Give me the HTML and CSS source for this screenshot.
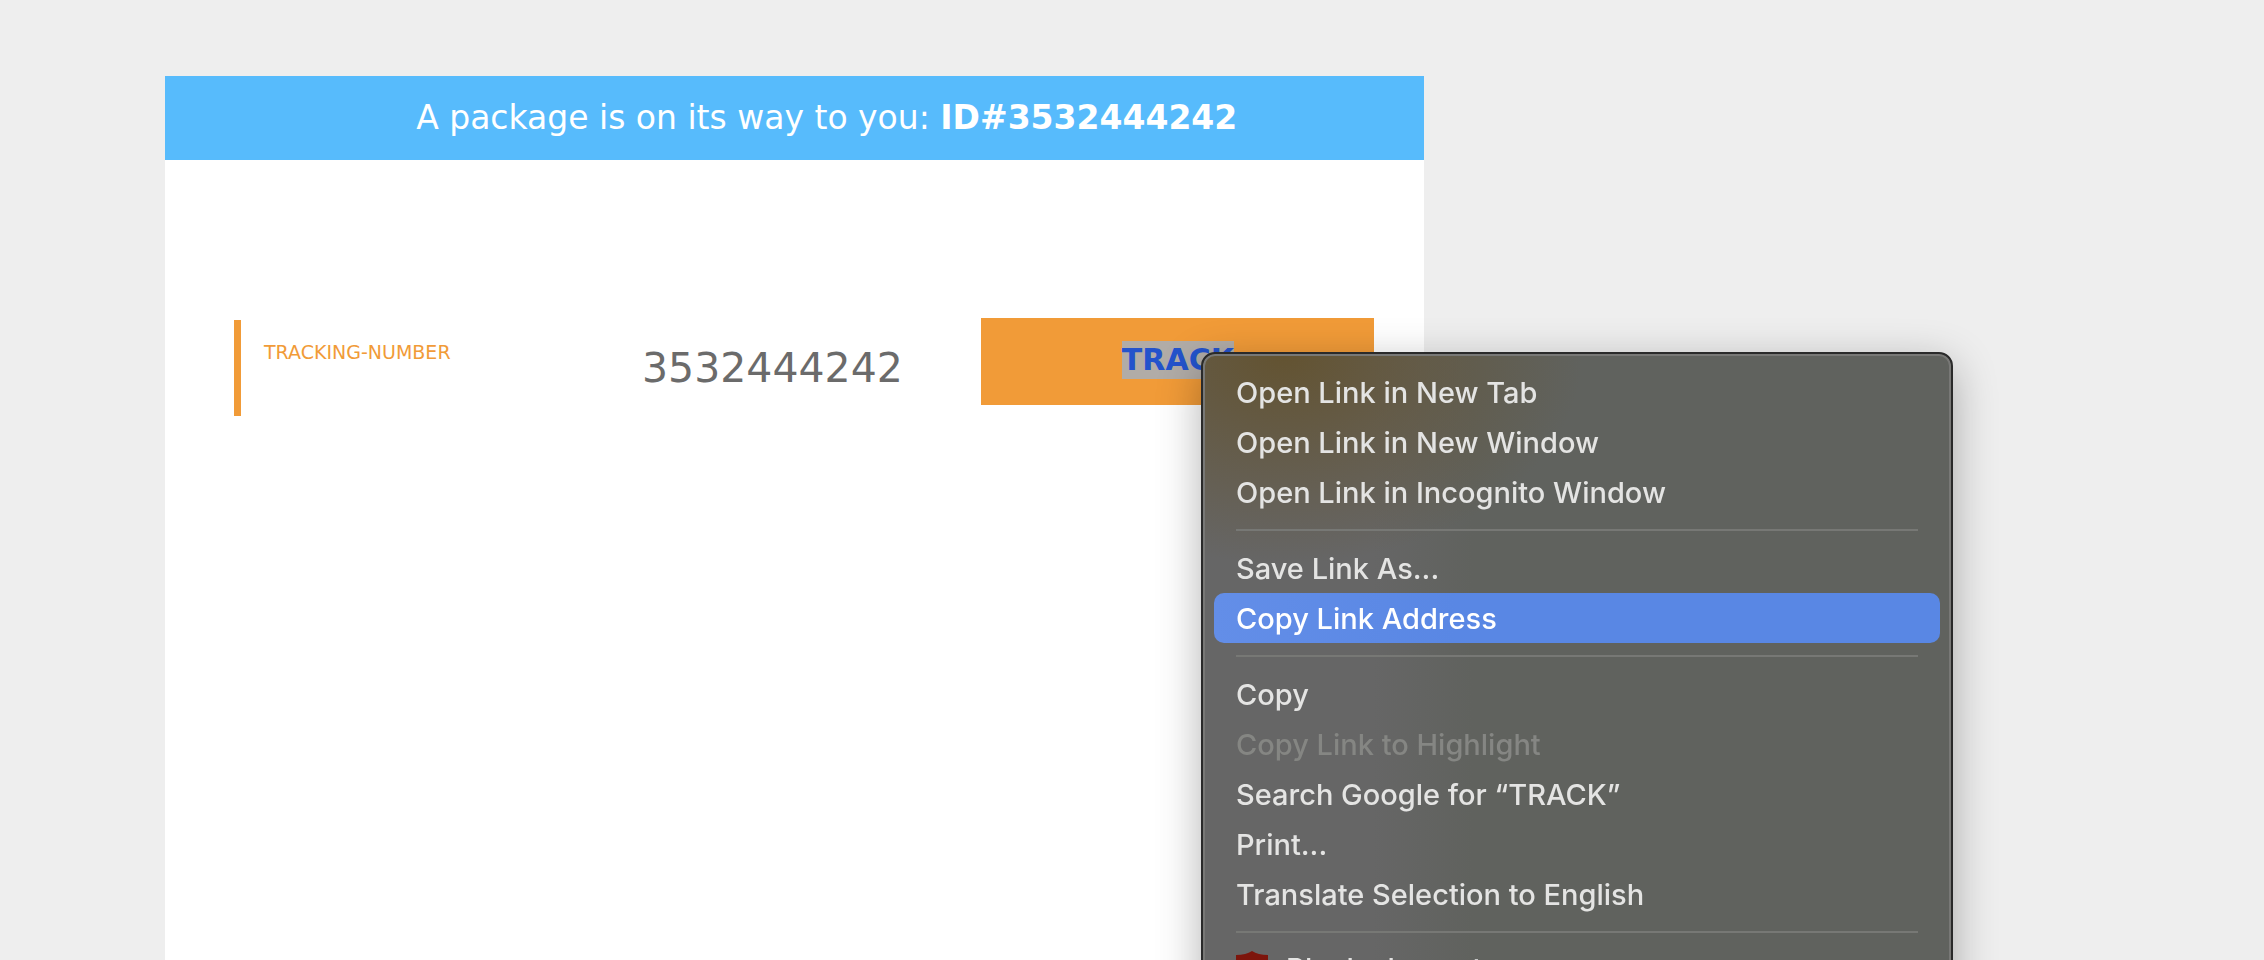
FILE: index.html
```html
<!DOCTYPE html>
<html lang="en">
<head>
<meta charset="utf-8">
<title>Package tracking</title>
<link rel="stylesheet" href="styles.css">
</head>
<body>
<main class="mail">
  <h1 class="mail-header">A package is on its way to you: <strong>ID#3532444242</strong></h1>
  <section class="tracking">
    <div class="tracking-label">TRACKING-NUMBER</div>
    <div class="tracking-number">3532444242</div>
    <a class="track-button" href="#track"><span class="selected">TRACK</span></a>
  </section>
</main>
<div class="menu" role="menu">
  <button class="item" role="menuitem">Open Link in New Tab</button>
  <button class="item" role="menuitem">Open Link in New Window</button>
  <button class="item" role="menuitem">Open Link in Incognito Window</button>
  <hr class="separator">
  <button class="item" role="menuitem">Save Link As...</button>
  <button class="item active" role="menuitem">Copy Link Address</button>
  <hr class="separator">
  <button class="item" role="menuitem">Copy</button>
  <button class="item" role="menuitem" disabled>Copy Link to Highlight</button>
  <button class="item" role="menuitem">Search Google for “TRACK”</button>
  <button class="item" role="menuitem">Print...</button>
  <button class="item" role="menuitem">Translate Selection to English</button>
  <hr class="separator">
  <button class="item with-icon" role="menuitem">
    <svg class="shield" viewBox="0 0 32 34" aria-hidden="true"><path d="M16 0 Q22 4 32 4 V16 Q32 28 16 34 Q0 28 0 16 V4 Q10 4 16 0Z" fill="#7d150c"/></svg>
    Block element...
  </button>
</div>
</body>
</html>
```
FILE: styles.css
```css
* {
  box-sizing: border-box;
}

html,
body {
  height: 100%;
  margin: 0;
  overflow: hidden;
}

body {
  display: flex;
  padding: 76px 0 0 165px;
  background: #eeeeee;
  font-family: "DejaVu Sans", Verdana, sans-serif;
}

.mail {
  width: 60%;
  background: #ffffff;
}

.mail-header {
  margin: 0;
  padding: 20px 0 21px 64px;
  background: #57bbfc;
  color: #ffffff;
  font-size: 33px;
  font-weight: 400;
  line-height: 43px;
  text-align: center;
}

.tracking {
  display: grid;
  grid-template-columns: 354px 1fr 393px;
  align-items: start;
  padding: 158px 50px 0 69px;
}

.tracking-label {
  margin-top: 2px;
  padding: 20px 0 0 23px;
  min-height: 96px;
  border-left: 7px solid #f19b38;
  color: #f19b38;
  font-size: 19px;
  line-height: 24px;
}

.tracking-number {
  padding: 26px 0 0 54px;
  color: #6b6b6b;
  font-size: 41px;
  line-height: 48px;
}

.track-button {
  display: block;
  padding: 23px 0 26px;
  background: #f19b38;
  color: #2453cc;
  font-size: 30px;
  font-weight: 700;
  line-height: 38px;
  text-align: center;
  text-decoration: none;
}

.selected {
  display: inline-block;
  background: #b1aca7;
}

.menu {
  position: fixed;
  top: 352px;
  left: 1201px;
  width: 752px;
  padding: 13px 11px;
  border: 2px solid #2a2a2a;
  border-radius: 14px;
  background:
    radial-gradient(ellipse 300px 210px at 80px 0, #635331 0%, #63533199 40%, #63533100 100%),
    linear-gradient(90deg, #666666 0, #666666 170px, #60625e 270px);
  box-shadow: inset 0 0 0 2px #787876, 0 12px 44px #0000004d;
  font-family: Inter, "Liberation Sans", sans-serif;
}

.item {
  display: flex;
  align-items: center;
  gap: 18px;
  width: 100%;
  height: 50px;
  padding: 0 22px;
  border: 0;
  border-radius: 10px;
  background: transparent;
  color: #e4e4e3;
  font: inherit;
  font-size: 29px;
  font-weight: 500;
  text-align: left;
  white-space: nowrap;
}

.with-icon {
  height: 46px;
}

.item:disabled {
  color: #858683;
}

.active {
  background: linear-gradient(90deg, #638ee8, #5987e4 240px);
  color: #ffffff;
}

.separator {
  height: 2px;
  margin: 12px 22px;
  border: 0;
  background: #777875;
}

.shield {
  width: 32px;
  height: 34px;
}
```
